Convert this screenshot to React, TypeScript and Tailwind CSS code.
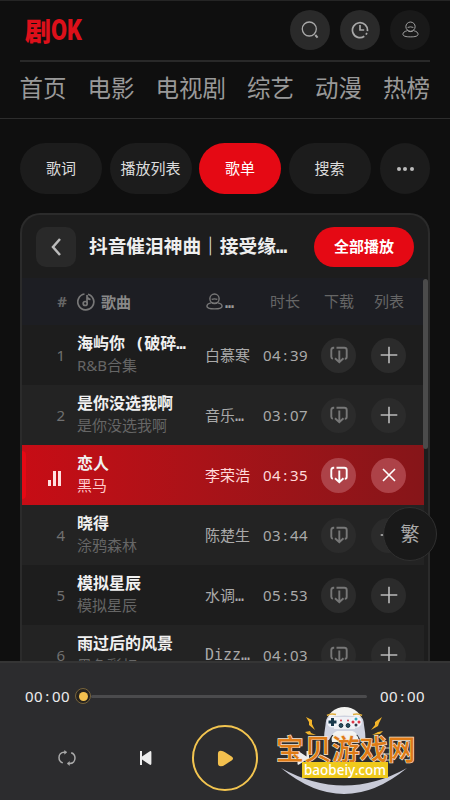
import React from 'react';

type Song = {
  id: number;
  title: string;
  album: string;
  artist: string;
  time: string;
  active?: boolean;
};

const navItems = ['首页', '电影', '电视剧', '综艺', '动漫', '热榜'];

const tabs = [
  { name: '歌词', active: false },
  { name: '播放列表', active: false },
  { name: '歌单', active: true },
  { name: '搜索', active: false },
];

const songs: Song[] = [
  { id: 1, title: '海屿你 (破碎…', album: 'R&B合集', artist: '白慕寒', time: '04:39' },
  { id: 2, title: '是你没选我啊', album: '是你没选我啊', artist: '音乐…', time: '03:07' },
  { id: 3, title: '恋人', album: '黑马', artist: '李荣浩', time: '04:35', active: true },
  { id: 4, title: '晓得', album: '涂鸦森林', artist: '陈楚生', time: '03:44' },
  { id: 5, title: '模拟星辰', album: '模拟星辰', artist: '水调…', time: '05:53' },
  { id: 6, title: '雨过后的风景', album: '黑色彩虹', artist: 'Dizz…', time: '04:03' },
];

// spaces, brackets and ellipses take a fixed-width cell
const Label = ({ text }: { text: string }) => (
  <>
    {text.split(/( \(|…)/).map((part, i) =>
      i % 2 ? (
        <span key={i} className="leading-none tracking-normal whitespace-pre font-['DejaVu_Sans_Mono']">
          {part}
        </span>
      ) : (
        part
      )
    )}
  </>
);

const UserIcon = ({ className }: { className: string }) => (
  <svg viewBox="0 0 18 18" className={className} fill="none" stroke="currentColor">
    <circle cx="9" cy="6" r="4.9" />
    <path d="M6 6.8q3-1.200 6 0M5.200 10.400C2.500 11 1 12.300 1 14c0 2 3 2.800 8 2.800s8-.8 8-2.800c0-1.700-1.500-3-4.200-3.600M5.600 9.800c1.700 1.900 5.100 1.900 6.800 0" />
  </svg>
);

const DownloadIcon = () => (
  <svg viewBox="0 0 18 18" className="size-[18px]" fill="none" stroke="currentColor" strokeWidth="1.900">
    <path d="M4.200 1.700h-.7Q1.300 2 1.300 4v6.800q0 1.400 1.500 2M6.500 1.700h7.800q2.400 0 2.400 2.300v6.900q0 1.700-1.900 1.900M9.300 4.500v11.500M5 12.300l4.300 3.900 4.200-3.900" />
  </svg>
);

// digits keep their own width, the colon gets a full digit cell
const Time = ({ value }: { value: string }) => {
  const [min, sec] = value.split(':');
  return (
    <span className="whitespace-nowrap tracking-[0.42px]">
      {min}
      <span className="inline-block w-[9px] text-center">:</span>
      {sec}
    </span>
  );
};

const SongRow = ({ song }: { song: Song }) => {
  const bg = song.active
    ? 'bg-linear-to-r from-[#c70c15] to-[#861519]'
    : song.id % 2
      ? 'bg-[#1d1d1d]'
      : 'bg-[#232323]';
  const circle = song.active ? 'bg-[#ad4248] text-white' : 'bg-[#2b2b2b] text-[#777]';
  return (
    <div className={`relative flex h-[60px] w-[402px] shrink-0 items-center ${bg}`}>
      {song.active && <div className="absolute top-[6px] left-0 h-12 w-1 rounded-r bg-[#e50914]" />}
      <div className="flex w-[55px] justify-end pr-[12px] text-[15px] text-[#707070]">
        {song.active ? (
          <div className="mr-[4px] flex h-[15px] translate-y-[3px] items-end gap-[2px]">
            <i className="h-[6px] w-[3px] bg-[#ffe0e0]" />
            <i className="h-[15px] w-[3px] bg-[#ffe0e0]" />
            <i className="h-[15px] w-[3px] bg-[#ffe0e0]" />
          </div>
        ) : (
          song.id
        )}
      </div>
      <div className="-mt-[2px] w-[128px] pr-2 text-[15px] leading-[22px] whitespace-nowrap">
        <div className="h-[22px] text-base leading-[22px] font-bold text-[#f0f0f0]">
          <Label text={song.title} />
        </div>
        <div className={song.active ? 'text-[#ffc9cc]' : 'text-[#666]'}>{song.album}</div>
      </div>
      <div className={`w-[58px] text-[15px] whitespace-nowrap ${song.active ? 'text-[#ffdadb]' : 'text-[#aaa]'}`}>
        {song.id === 6 ? (
          <span className="font-['DejaVu_Sans_Mono']">{song.artist}</span>
        ) : (
          <Label text={song.artist} />
        )}
      </div>
      <div className={`w-[58px] text-[15px] ${song.active ? 'text-[#ffdadb]' : 'text-[#aaa]'}`}>
        <Time value={song.time} />
      </div>
      <div className={`flex size-[35px] items-center justify-center rounded-full ${circle}`}>
        <DownloadIcon />
      </div>
      <div className={`ml-[15px] flex size-[35px] items-center justify-center rounded-full ${circle}`}>
        <svg viewBox="0 0 18 18" className={`size-[18px] ${song.active ? 'text-white' : 'text-[#bbb]'}`} stroke="currentColor" strokeWidth="1.6">
          {song.active ? <path d="M3 3l12 12M15 3L3 15" /> : <path d="M9 .7v16.600M.7 9h16.600" />}
        </svg>
      </div>
    </div>
  );
};

const Header = () => (
  <header className="h-[119px] shrink-0 border-t border-b border-t-[#252525] border-b-[#2d2d2d] px-5">
    <div className="flex h-[61px] items-center justify-between border-b-2 border-[#292929] pb-[2px]">
      <div className="ml-[5px] flex h-7 items-center font-black text-[#dc101a]">
        <span className="w-[26px] text-[26px] leading-7 font-['Noto_Sans_CJK_SC']">剧</span>
        <span className="origin-left scale-x-[0.8] text-[29px] leading-7 font-['Roboto']">OK</span>
      </div>
      <div className="flex gap-[10px] text-[#a8a8a8]">
        <div className="flex size-10 items-center justify-center rounded-full bg-[#2a2a2a]">
          <svg viewBox="0 0 18 18" className="size-[18px]" fill="none" stroke="currentColor" strokeWidth="1.3">
            <circle cx="8.3" cy="8" r="7" />
            <path d="M14.3 14l2.300 2.600" strokeWidth="2" />
          </svg>
        </div>
        <div className="flex size-10 items-center justify-center rounded-full bg-[#2a2a2a]">
          <svg viewBox="0 0 18 18" className="size-[18px]" fill="none" stroke="currentColor" strokeWidth="1.7">
            <path d="M13.300 15.300A7.500 7.500 0 1 1 16.400 10.200M9 4v5h4.200M15.900 12l-.9 1.600" />
          </svg>
        </div>
        <div className="flex size-10 items-center justify-center rounded-full bg-[#191919]">
          <UserIcon className="size-[17px]" />
        </div>
      </div>
    </div>
    <nav className="-ml-[0.500px] flex justify-between pt-[8px] text-[23.500px] leading-9 whitespace-nowrap text-[#999]">
      {navItems.map((item) => (
        <span key={item}>{item}</span>
      ))}
    </nav>
  </header>
);

const Player = () => (
  <footer className="absolute inset-x-0 bottom-0 h-[139px] border-t-2 border-[#353535] bg-[#2c2c2e]">
    <div className="mb-[2px] flex h-[66px] items-center px-[25px] text-[15px] text-[#ededed]">
      <Time value="00:00" />
      <div className="ml-[5px] flex size-4 items-center justify-center rounded-full border border-[#78643b] bg-[#26231f]">
        <div className="size-[9px] rounded-full bg-[#f3c04e]" />
      </div>
      <div className="mr-[13px] h-[3px] flex-1 rounded bg-[#4b4b4d]" />
      <Time value="00:00" />
    </div>
    <div className="flex items-center pl-[58px]">
      <svg viewBox="0 0 18 16" className="mt-[-6px] h-4 w-[18px] text-[#aaa]" fill="none" stroke="currentColor" strokeWidth="1.500">
        <path d="M7.500 2.200H6.200C3 2.200 1 4.700 1 7.600c0 2.700 1.500 4.600 3.800 5.300M10.500 13.500h1.300c3.200 0 5.200-2.500 5.200-5.400 0-2.700-1.500-4.600-3.800-5.300" />
        <path d="M6.500.4L9 2.200l-2.500 2zM11.500 11.500L9 13.500l2.500 2z" fill="currentColor" strokeWidth=".4" />
      </svg>
      <svg viewBox="0 0 12 14" className="mt-[-6px] ml-[64px] h-[14px] w-3" fill="#ededed">
        <path d="M0 0h2v5.500L9.500.4Q11.400-.5 11.400 1.500v11q0 2-1.900 1.100L2 8.500V14H0z" />
      </svg>
      <div className="mt-[-6px] ml-[40px] flex size-[66px] items-center justify-center rounded-full border-2 border-[#f3c550]">
        <svg viewBox="0 0 18 18" className="size-[17px]" fill="#f3c04e">
          <path d="M1 4Q1 .8 4 .8q2.500 0 4.500 1.700l7 4.300q3 2.200 0 4.400l-7 4.300Q6.500 17.200 4 17.200q-3 0-3-3.200z" />
        </svg>
      </div>
      <svg viewBox="0 0 12 14" className="mt-[-6px] ml-[39px] h-[14px] w-3" fill="#ededed">
        <path d="M2 .5Q.5-.5.5 1.500v11q0 2 1.500 1L9.500 8.500V14H12V0H9.500v5.500z" />
      </svg>
      <svg viewBox="0 0 18 16" className="mt-[-15px] ml-[68px] h-4 w-[18px]" stroke="#999" strokeWidth="1.300">
        <path d="M0 2h14M0 8h14M0 14h14" />
      </svg>
    </div>
  </footer>
);

const Badge = () => (
  <div className="absolute top-[706px] left-[274px] h-[90px] w-[144px]">
    <svg viewBox="0 0 144 90" className="absolute inset-0 h-[90px] w-[144px]">
      <path d="M7 62q63 35 126 0-63 52-126 0z" fill="#c9cbd8" />
      <ellipse cx="70.500" cy="17" rx="18" ry="16" fill="#f4f4f2" />
      <path d="M58 36q-2-6 4-8h18q6 2 4 8z" fill="#f2f2f0" />
      <path d="M54 11q16.500-3 33 0 2.500 1 3 8 1.500 8 1.500 15h-5q-4-8-8-9H63q-4 1-8 9h-5q0-7 1.500-15 .5-7 2.500-8z" fill="#cfd3e0" />
      <path d="M60 11h21v12H60z" fill="#eff0f5" />
      <path d="M53 9.500q4-2.500 9-1M79 8.500q5-1.500 9 1" stroke="#dfac3c" strokeWidth="1.600" fill="none" />
      <circle cx="58.500" cy="16" r="5.500" fill="#f2f4fa" />
      <path d="M58.500 12v8M54.500 16h8" stroke="#18384b" strokeWidth="3" />
      <circle cx="82" cy="16" r="5.800" fill="#f2f4fa" />
      <g fill="#dc3545">
        <circle cx="79" cy="16" r="1.500" />
        <circle cx="85" cy="16" r="1.500" />
        <circle cx="67" cy="14.500" r="1" />
        <circle cx="74" cy="14.500" r="1" />
      </g>
      <circle cx="82" cy="13" r="1.500" fill="#35a9bd" />
      <circle cx="82" cy="19" r="1.500" fill="#303c4b" />
      <g fill="#285064" stroke="#142b3a" strokeWidth="1">
        <circle cx="67" cy="19.500" r="1.900" />
        <circle cx="74" cy="19.500" r="1.900" />
      </g>
      <path d="M32 11l6 3v4l3 6-6-5v-3zM31 26l5-1 1 2 5 2-8-.5zM108 11l-7 5v3l-4 5 7-4 1-3zM109 25l-5 1-6 3 8-1z" fill="#f3b42a" />
    </svg>
    <div className="absolute top-[28px] left-[2px] h-[28px] text-[27.900px] leading-[28px] font-medium whitespace-nowrap text-[#df7b16] [-webkit-text-stroke:1.300px_#f5e6d2] [paint-order:stroke_fill] font-['Noto_Sans_CJK_SC']">
      宝贝游戏网
    </div>
    <div className="absolute top-[56px] left-[28px] flex h-4 w-[86px] items-center justify-center bg-[#efc91c] text-[13.500px] leading-4 font-medium text-white font-['Noto_Sans']">
      baobeiy.com
    </div>
  </div>
);

const App: React.FC = () => {
  return (
    <div className="relative flex h-[800px] w-[450px] flex-col overflow-hidden bg-[#0f0f0f] font-['Noto_Sans','Noto_Sans_CJK_SC',sans-serif]">
      <Header />

      <div className="mt-[24px] flex h-[51px] shrink-0 justify-between px-5">
        <div className="flex gap-[7.500px]">
          {tabs.map((tab) => (
            <button
              key={tab.name}
              className={`w-[82px] rounded-full text-[15px] whitespace-nowrap ${tab.active ? 'bg-[#e50914] text-white' : 'bg-[#1c1c1c] text-[#ddd]'}`}
            >
              {tab.name}
            </button>
          ))}
        </div>
        <button className="flex w-[50px] items-center justify-center gap-[2.500px] rounded-full bg-[#1c1c1c]">
          <i className="size-[4px] rounded-full bg-[#bbb]" />
          <i className="size-[4px] rounded-full bg-[#bbb]" />
          <i className="size-[4px] rounded-full bg-[#bbb]" />
        </button>
      </div>

      <main className="relative mx-5 mt-[19px] flex h-[500px] shrink-0 flex-col overflow-hidden rounded-t-[20px] border-2 border-b-0 border-[#2b2b2b] bg-[#1d1d1d]">
        <div className="flex h-[63px] shrink-0 items-center pr-[14px] pl-[14px]">
          <button className="flex size-10 items-center justify-center rounded-[10px] bg-[#292929]">
            <svg viewBox="0 0 12 18" className="h-[18px] w-3" fill="none" stroke="#bbb" strokeWidth="2.500">
              <path d="M10 1L3 9l7 8" />
            </svg>
          </button>
          <h2 className="ml-[13px] h-7 flex-1 text-[18.700px] leading-[25px] font-bold whitespace-nowrap text-[#eee]">
            <Label text="抖音催泪神曲｜接受缘…" />
          </h2>
          <button className="h-10 w-[100px] shrink-0 rounded-full bg-[#e50914] text-[15px] font-bold text-white">
            全部播放
          </button>
        </div>

        <div className="flex h-[47px] w-[402px] shrink-0 items-center bg-[#1d1e23] text-[15px] whitespace-nowrap text-[#666]">
          <div className="w-[55px] pr-[10px] text-right font-bold">#</div>
          <div className="flex w-[129px] items-center font-bold text-[#888]">
            <svg viewBox="0 0 18 18" className="mr-[6px] size-[18px]" fill="none" stroke="#777" strokeWidth="1.700">
              <path d="M7.500 1A8 8 0 1 0 11 1.200M10 2v8M10 3.500q.5 2.500 3.500 3" />
              <circle cx="8.200" cy="10.500" r="2" />
            </svg>
            <span className="translate-y-[1px]">歌曲</span>
          </div>
          <div className="flex w-[64px] items-center font-bold text-[#999]">
            <UserIcon className="mr-[2px] size-[17px] stroke-[1.500] text-[#777]" />
            <span className="translate-y-[1px]">
              <Label text="…" />
            </span>
          </div>
          <div className="w-[54px]">时长</div>
          <div className="w-[50px]">下载</div>
          <div>列表</div>
        </div>

        {songs.map((song) => (
          <SongRow key={song.id} song={song} />
        ))}
        <div className="absolute top-[64px] right-0 h-[170px] w-[5px] rounded-full bg-[#4b4b4b]" />
      </main>

      <div className="absolute top-[507px] left-[383px] flex size-[54px] items-center justify-center rounded-full border border-[#303030] bg-[#191919] text-[19px] text-[#aaa]">
        繁
      </div>

      <Player />
      <Badge />
    </div>
  );
};

export default App;
